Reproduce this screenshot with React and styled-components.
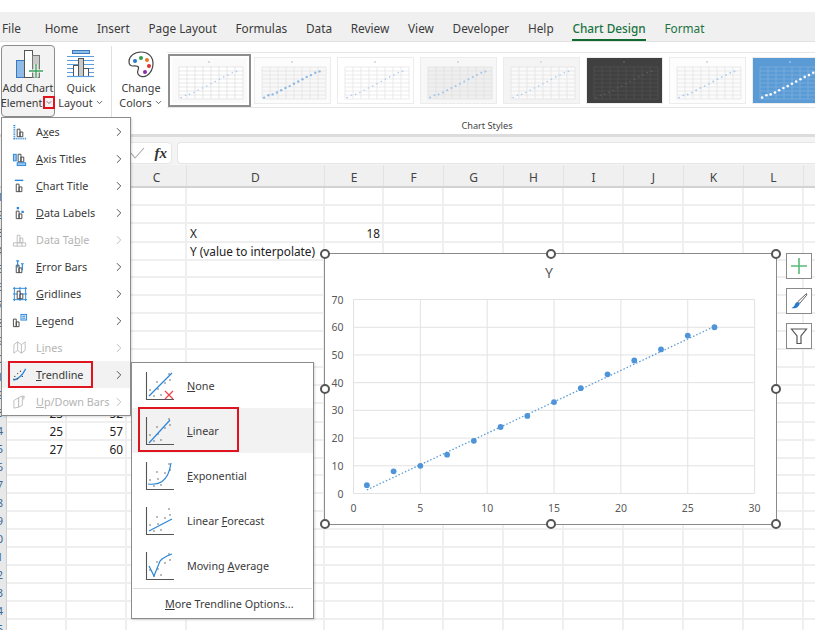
import React from 'react';
import styled, { createGlobalStyle } from 'styled-components';
import { ChevronRight, ChevronDown } from 'lucide-react';

const GlobalStyle = createGlobalStyle`
  html, body {
    margin: 0;
    padding: 0;
    background: #fff;
    overflow: hidden;
  }
  body {
    font-family: "Noto Sans", "Open Sans", sans-serif;
    color: #3b3b3b;
  }
`;

const COLS = '7px 60px 60px 60px 138px 59px repeat(8, 60px)';
const RED = '#e0141f';

const Page = styled.div`
  position: relative;
  width: 815px;
  height: 643px;
  overflow: hidden;
  background: #fff;
  padding-top: 12px;
  box-sizing: border-box;
`;

const TabBar = styled.div`
  display: flex;
  gap: 18.75px;
  height: 29px;
  padding-left: 2px;
  background: #f0f0f0;
  border-bottom: 1px solid #e2e2e2;
  font-size: 11.8px;
`;

const Tab = styled.div`
  height: 29px;
  line-height: 33px;
  box-sizing: border-box;
  white-space: nowrap;
  margin-right: ${p => (p.$first ? '5px' : '0')};
  color: ${p => (p.$green ? '#1a7340' : '#3b3b3b')};
  font-weight: ${p => (p.$active ? 500 : 400)};
  border-bottom: ${p => (p.$active ? '2px solid #0f6b2f' : '0')};
`;

const Ribbon = styled.div`
  display: flex;
  height: 92px;
  background: #fff;
`;

const RibbonButton = styled.div`
  width: ${p => p.$w}px;
  height: 72px;
  margin: 3px 0 0 ${p => p.$ml}px;
  box-sizing: border-box;
  padding-top: ${p => (p.$open ? 4 : 5)}px;
  display: flex;
  flex-direction: column;
  align-items: center;
  font-size: 10.8px;
  line-height: 15px;
  white-space: nowrap;
  color: #3b3b3b;
  background: ${p => (p.$open ? '#f3f3f3' : 'transparent')};
  border: ${p => (p.$open ? '1px solid #8c8c8c' : '0')};
  border-radius: 4px;
`;

const BigIcon = styled.svg`
  height: 30px;
  width: 30px;
  flex: none;
`;

const LabelLine = styled.div`
  display: flex;
  align-items: center;
  height: 15px;
`;

const Caret = styled.span`
  display: inline-flex;
  align-items: center;
  justify-content: center;
  box-sizing: border-box;
  width: ${p => (p.$marked ? '12px' : '9px')};
  height: ${p => (p.$marked ? '13px' : '12px')};
  margin-left: ${p => (p.$marked ? '1px' : '2px')};
  border: ${p => (p.$marked ? `2px solid ${RED}` : '0')};
`;

const Divider = styled.div`
  width: 1px;
  height: 74px;
  margin: 4px 0 0 9px;
  background: #e0e0e0;
`;

const StylesGroup = styled.div`
  flex: 1;
  min-width: 0;
  margin: 10px 0 0 1px;
`;

const Gallery = styled.div`
  display: flex;
  gap: 8px;
  height: 56px;
  box-sizing: border-box;
  padding: 5px 0 4px 5px;
  border-top: 1px solid #e6e6e6;
  border-bottom: 1px solid #e6e6e6;
  overflow: hidden;
`;

const Thumb = styled.svg`
  width: 75px;
  height: 45px;
  flex: none;
  outline: ${p => (p.$selected ? '2px solid #8e8e8e' : '1px solid #ececec')};
  outline-offset: ${p => (p.$selected ? '2px' : '0')};
`;

const GroupLabel = styled.div`
  margin-top: 11px;
  padding-right: 8px;
  font-size: 9.2px;
  line-height: 14px;
  text-align: center;
  color: #444;
`;

const FormulaBar = styled.div`
  display: flex;
  gap: 5px;
  height: 31px;
  box-sizing: border-box;
  padding: 5px 0 1px 100px;
  background: #f4f4f4;
  border-top: 3px solid #dcdcdc;
`;

const FxBox = styled.div`
  width: 72px;
  box-sizing: border-box;
  display: flex;
  align-items: center;
  justify-content: flex-end;
  gap: 9px;
  padding-right: 4px;
  background: #fff;
  border: 1px solid #e6e6e6;
  border-radius: 4px;
`;

const FxLabel = styled.span`
  font-family: "Liberation Serif", serif;
  font-style: italic;
  font-weight: 700;
  font-size: 15px;
  color: #333;
`;

const FormulaInput = styled.div`
  flex: 1;
  background: #fff;
  border: 1px solid #e6e6e6;
  border-right: 0;
  border-radius: 4px 0 0 4px;
`;

const ColumnHeader = styled.div`
  display: grid;
  grid-template-columns: ${COLS};
  height: 23px;
  box-sizing: border-box;
  background: #f0f0f0;
  border-bottom: 2px solid #d2d2d2;
`;

const ColumnLetter = styled.div`
  padding-top: 5px;
  text-align: center;
  font-size: 12px;
  line-height: 16px;
  color: #444;
  border-right: 1px solid #e2e2e2;
`;

const Sheet = styled.div`
  height: 442px;
  overflow: hidden;
`;

const Row = styled.div`
  display: grid;
  grid-template-columns: ${COLS};
  height: 18px;
`;

const RowHead = styled.div`
  display: flex;
  justify-content: flex-end;
  padding-right: 3px;
  overflow: hidden;
  font-size: 11px;
  line-height: 18px;
  color: #3c6a96;
  background: #e8e8e8;
  border-right: 1px solid #cfcfcf;
`;

const Cell = styled.div`
  box-sizing: border-box;
  padding: 1px 2px 0 3px;
  font-size: 11.8px;
  line-height: 16px;
  white-space: nowrap;
  color: #222;
  text-align: ${p => (p.$num ? 'right' : 'left')};
  border-right: 2px solid #efefef;
  border-bottom: 2px solid #efefef;
`;

const Menu = styled.div`
  position: absolute;
  left: ${p => p.$x}px;
  top: ${p => p.$y}px;
  width: ${p => p.$w}px;
  box-sizing: border-box;
  background: #fff;
  border: 1px solid #8c8c8c;
  box-shadow: 1px 1px 2px rgba(0, 0, 0, 0.15);
  font-size: 10.8px;
  z-index: 3;
`;

const MainItem = styled.div`
  position: relative;
  display: flex;
  align-items: center;
  height: 27px;
  padding-left: 10px;
  color: ${p => (p.$off ? '#b4b4b4' : '#3b3b3b')};
  background: ${p => (p.$hot ? '#f2f2f2' : 'transparent')};
`;

const MenuIcon = styled.svg`
  width: 16px;
  height: 16px;
  flex: none;
  margin-right: 8px;
`;

const ItemText = styled.span`
  flex: 1;
  white-space: nowrap;
`;

const Arrow = styled.span`
  display: flex;
  margin-right: 4px;
  color: ${p => (p.$off ? '#b4b4b4' : '#3b3b3b')};
`;

const RedBox = styled.div`
  position: absolute;
  left: ${p => p.$x}px;
  top: ${p => p.$y}px;
  width: ${p => p.$w}px;
  height: ${p => p.$h}px;
  box-sizing: border-box;
  border: 2px solid ${RED};
`;

const TrendItem = styled.div`
  position: relative;
  display: flex;
  align-items: center;
  height: 45px;
  padding-left: 13px;
  background: ${p => (p.$hot ? '#f2f2f2' : 'transparent')};
`;

const TrendIcon = styled.svg`
  width: 30px;
  height: 30px;
  flex: none;
  margin-right: 12px;
`;

const MenuRule = styled.div`
  height: 1px;
  margin: 0 1px;
  background: #dcdcdc;
`;

const MoreItem = styled.div`
  height: 29px;
  line-height: 29px;
  padding-left: 33px;
  white-space: nowrap;
`;

const ChartArea = styled.div`
  position: absolute;
  left: 324px;
  top: 253px;
  display: flex;
  gap: 9px;
  z-index: 2;
`;

const ChartFrame = styled.div`
  position: relative;
  width: 453px;
  height: 272px;
  box-sizing: border-box;
  background: #fff;
  border: 1.5px solid #8a8a8a;
`;

const ChartSvg = styled.svg`
  display: block;
  width: 450px;
  height: 269px;
`;

const Handle = styled.span`
  position: absolute;
  left: ${p => p.$x}%;
  top: ${p => p.$y}%;
  width: 10px;
  height: 10px;
  margin: -5px 0 0 -5px;
  box-sizing: border-box;
  background: #fff;
  border: 2px solid #555;
  border-radius: 50%;
`;

const ChartTools = styled.div`
  display: flex;
  flex-direction: column;
  gap: 9px;
`;

const ToolButton = styled.div`
  display: flex;
  align-items: center;
  justify-content: center;
  width: 26px;
  height: 26px;
  box-sizing: border-box;
  background: #fff;
  border: 1.5px solid #8a8a8a;
`;

const points = [[1, 3], [3, 8], [5, 10], [7, 14], [9, 19], [11, 24], [13, 28], [15, 33], [17, 38], [19, 43], [21, 48], [23, 52], [25, 57], [27, 60]];

const tabs = ['File', 'Home', 'Insert', 'Page Layout', 'Formulas', 'Data', 'Review', 'View', 'Developer', 'Help'];
const letters = ['A', 'B', 'C', 'D', 'E', 'F', 'G', 'H', 'I', 'J', 'K', 'L', 'M'];

// A and B sit under the menu, M starts past the right edge
const headLabel = l => ('ABM'.includes(l) ? '' : l);

const sheetData = {
  3: { D: ['X'], E: ['18', true] },
  4: { D: ['Y (value to interpolate)'] },
  13: { A: ['23', true], B: ['52', true] },
  14: { A: ['25', true], B: ['57', true] },
  15: { A: ['27', true], B: ['60', true] },
};

const thumbs = [
  { bg: '#fafafa', plot: '#fff', grid: '#d9d9d9', dot: '#a9c9ea', r: 0.8, selected: true },
  { bg: '#fcfcfc', plot: '#f8f8f8', grid: '#dedede', dot: '#8fb8e4', r: 1.2 },
  { bg: '#fff', plot: '#fff', grid: '#dddddd', dot: '#a9c9ea', r: 0.8 },
  { bg: '#f7f7f7', plot: '#efefef', grid: '#dcdcdc', dot: '#a2c4e8', r: 1 },
  { bg: '#f4f4f4', plot: '#fafafa', grid: '#dedede', dot: '#a9c9ea', r: 0.8 },
  { bg: '#404040', plot: '#404040', grid: '#555555', dot: '#5f5f5f', r: 0.8 },
  { bg: '#fdfdfd', plot: '#fbfbfb', grid: '#dddddd', dot: '#a9c9ea', r: 0.9 },
  { bg: '#5b9bd5', plot: '#5b9bd5', grid: '#86b6e2', dot: '#ffffff', r: 1.3 },
];

function StyleThumb({ bg, plot, grid, dot, r, selected }) {
  const xs = [7, 15, 23, 31, 39, 47, 55, 63, 71];
  const ys = [9, 13, 17, 21, 25, 29, 33, 37, 41];
  return (
    <Thumb viewBox="0 0 75 45" $selected={selected}>
      <rect width="75" height="45" fill={bg} />
      <rect x="7" y="9" width="64" height="32" fill={plot} />
      {xs.map(x => <line key={x} x1={x} x2={x} y1="9" y2="41" stroke={grid} strokeWidth="0.6" />)}
      {ys.map(y => <line key={y} y1={y} y2={y} x1="7" x2="71" stroke={grid} strokeWidth="0.6" />)}
      <rect x="36" y="3" width="2" height="2" fill={grid} />
      {points.map(([px, py]) => (
        <circle key={px} cx={7 + px * 2.13} cy={41 - py * 0.46} r={r} fill={dot} />
      ))}
    </Thumb>
  );
}

const AddChartIcon = () => (
  <BigIcon viewBox="0 0 30 30">
    <rect x="3.5" y="10.5" width="8" height="17" fill="#8fbce6" stroke="#3a78c0" />
    <rect x="11.5" y="0.5" width="8" height="27" fill="#fff" stroke="#555" />
    <rect x="19.5" y="5.5" width="7" height="22" fill="#c9c9c9" stroke="#777" />
    <path d="M16 21h14M23 14v14" stroke="#fff" strokeWidth="3" />
    <path d="M16 21h14M23 14v14" stroke="#3aa35c" strokeWidth="1.4" />
  </BigIcon>
);

const QuickLayoutIcon = () => (
  <BigIcon viewBox="0 0 30 30">
    <rect x="6.5" y="0.5" width="17" height="3" fill="#8fbce6" stroke="#3a78c0" />
    <path d="M1 6.5h27M1 10.5h27M1 14.5h27M1 18.5h27M1 22.5h27" stroke="#5b9fe0" strokeWidth="1.2" />
    <rect x="7.5" y="15.5" width="5" height="11" fill="#fff" stroke="#555" />
    <rect x="12.5" y="8.5" width="5" height="18" fill="#c9c9c9" stroke="#555" />
    <rect x="17.5" y="18.5" width="5" height="8" fill="#fff" stroke="#555" />
    <path d="M1 26.5h27" stroke="#5b9fe0" strokeWidth="1.2" />
  </BigIcon>
);

const PaletteIcon = () => (
  <BigIcon viewBox="0 0 28 30">
    <path d="M14 2C7 2 2 6.5 2 11.5c0 3 2 4.5 4 4.5 3 0 5-.5 5.5 1.500.5 2-2 3.500-.5 6.500 1.500 3 6 3.500 9 1.500 3.500-2.500 6-7 6-12C26 6.500 21 2 14 2z" fill="#fff" stroke="#444" strokeWidth="1.2" />
    <circle cx="8" cy="11" r="2" fill="#2a78c8" />
    <circle cx="14" cy="8" r="2" fill="#2f9e4f" />
    <circle cx="20" cy="10" r="2" fill="#e87722" />
    <circle cx="22" cy="16" r="2" fill="#e0302f" />
    <circle cx="18" cy="22" r="2" fill="#8a2da8" />
  </BigIcon>
);

const BLUE = '#2a86d8';
const GREY = '#bdbdbd';

const barPair = (c = '#444', dx = 0, dy = 0) => (
  <path d={`M${5.5 + dx} ${5.5 + dy}h3v8h-3zM${8.5 + dx} ${8.5 + dy}h3v5h-3z`} fill="#fff" stroke={c} />
);

const menuGlyphs = {
  axes: (
    <>
      {barPair()}
      <path d="M2.500 1v14.500h13" fill="none" stroke={BLUE} strokeWidth="2" strokeDasharray="1 1" />
    </>
  ),
  axisTitles: (
    <>
      {barPair('#444', 1, -2)}
      <rect x="1.500" y="3.500" width="3" height="7" fill="#9cc8ee" stroke={BLUE} />
      <rect x="5.500" y="12.500" width="9" height="3" fill="#9cc8ee" stroke={BLUE} />
    </>
  ),
  chartTitle: (
    <>
      {barPair('#444', -1, 1)}
      <path d="M3 2.500h9" stroke={BLUE} strokeWidth="1.500" />
    </>
  ),
  dataLabels: (
    <>
      {barPair('#444', -1, 1)}
      <path d="M5 2h2.500v2.500H5zM10 6h2.500v2.500H10z" fill={BLUE} />
    </>
  ),
  dataTable: (
    <>
      {barPair(GREY, 0, -2)}
      <path d="M1.500 11.500h13v3.500h-13zM5.500 11.500v3.500M10.500 11.500v3.500" fill="none" stroke={GREY} />
    </>
  ),
  errorBars: (
    <>
      {barPair('#444', -1, 1)}
      <path d="M6 2v7M4.500 2h3M11 5v7M9.500 5h3" fill="none" stroke={BLUE} strokeWidth="1.200" />
    </>
  ),
  gridlines: (
    <>
      <path d="M1 2.500h15M1 8.500h15M1 14.500h15M2.500 1v15M8.500 1v15M14.500 1v15" stroke={BLUE} fill="none" />
      {barPair()}
    </>
  ),
  legend: (
    <>
      {barPair('#444', -4, 1)}
      <rect x="9.500" y="1.500" width="6" height="6" fill="#d9ebfa" stroke={BLUE} />
      <path d="M11 3.500h3M11 5.500h3" stroke={BLUE} />
    </>
  ),
  lines: (
    <path d="M2 5l4-3 4 3 4-3v9l-4 3-4-3-4 3zM6 2v9M10 5v9" fill="none" stroke={GREY} />
  ),
  trendline: (
    <>
      <path d="M1.500 14C6 13 11 9 14.500 2" fill="none" stroke={BLUE} strokeWidth="1.300" />
      <path d="M3 10h.01M6 12.500h.01M6 7h.01M9 4.500h.01M11 10h.01M2 13h.01" stroke="#444" strokeWidth="1.400" strokeLinecap="round" />
    </>
  ),
  upDown: (
    <path d="M2 7l5-3v10l-5 1zM7 4l4-2v10l-4 2zM12.500 2v4M11.500 3.500l1-1.500 1 1.500" fill="none" stroke={GREY} />
  ),
};

const mainItems = [
  { icon: 'axes', text: ['A', 'x', 'es'] },
  { icon: 'axisTitles', text: ['', 'A', 'xis Titles'] },
  { icon: 'chartTitle', text: ['', 'C', 'hart Title'] },
  { icon: 'dataLabels', text: ['', 'D', 'ata Labels'] },
  { icon: 'dataTable', text: ['Data Ta', 'b', 'le'], off: true },
  { icon: 'errorBars', text: ['', 'E', 'rror Bars'] },
  { icon: 'gridlines', text: ['', 'G', 'ridlines'] },
  { icon: 'legend', text: ['', 'L', 'egend'] },
  { icon: 'lines', text: ['L', 'i', 'nes'], off: true },
  { icon: 'trendline', text: ['', 'T', 'rendline'], hot: true },
  { icon: 'upDown', text: ['', 'U', 'p/Down Bars'], off: true },
];

const dots = 'M5 19h.01M9 25h.01M13 18h.01M16 24h.01M20 12h.01M12 11h.01M24 3h.01M25 9h.01';

const trendItems = [
  {
    text: ['', 'N', 'one'],
    glyph: (
      <>
        <path d="M4 25L27 2" stroke={BLUE} strokeWidth="1.200" fill="none" />
        <path d="M20 20l8 8M28 20l-8 8" stroke="#e8444a" strokeWidth="1.200" />
      </>
    ),
  },
  {
    text: ['', 'L', 'inear'],
    hot: true,
    glyph: <path d="M4 27L25 4" stroke={BLUE} strokeWidth="1.200" fill="none" />,
  },
  {
    text: ['', 'E', 'xponential'],
    glyph: <path d="M3 23c9 1 20 0 23-21" stroke={BLUE} strokeWidth="1.200" fill="none" />,
  },
  {
    text: ['Linear ', 'F', 'orecast'],
    glyph: <path d="M4 25L27 13" stroke={BLUE} strokeWidth="1.200" fill="none" />,
  },
  {
    text: ['Moving ', 'A', 'verage'],
    glyph: <path d="M4 15l5 10 6-15 2-2 5-3 5-2" stroke={BLUE} strokeWidth="1.200" fill="none" />,
  },
];

const AccessText = ({ parts }) => (
  <ItemText>
    {parts[0]}<u>{parts[1]}</u>{parts[2]}
  </ItemText>
);

function ScatterChart() {
  const px = x => 354 + x * 13.37;
  const py = y => 494 - y * 2.771;
  const xTicks = [0, 5, 10, 15, 20, 25, 30];
  const yTicks = [0, 10, 20, 30, 40, 50, 60, 70];
  const label = { fontFamily: '"Noto Sans", sans-serif', fontSize: 10.5, fill: '#595959' };
  return (
    <ChartSvg viewBox="325.500 254.500 450 269">
      <text x="549.500" y="278" textAnchor="middle" style={{ ...label, fontSize: 14 }}>Y</text>
      {xTicks.map(t => (
        <g key={t}>
          <line x1={px(t)} x2={px(t)} y1="300" y2="494" stroke="#e2e2e2" />
          <text x={px(t)} y="512" textAnchor="middle" style={label}>{t}</text>
        </g>
      ))}
      {yTicks.map(t => (
        <g key={t}>
          <line y1={py(t)} y2={py(t)} x1="354" x2="755" stroke="#e2e2e2" />
          <text x="344" y={py(t) + 4} textAnchor="end" style={label}>{t}</text>
        </g>
      ))}
      <line x1={px(1)} y1={py(1.300)} x2={px(27)} y2={py(60.300)} stroke="#5b9bd5" strokeWidth="1.300" strokeDasharray="1.500 2" />
      {points.map(([x, y]) => (
        <circle key={x} cx={px(x)} cy={py(y)} r="2.900" fill="#4f94d8" />
      ))}
    </ChartSvg>
  );
}

export default function App() {
  const rows = Array.from({ length: 25 }, (_, i) => i + 1);
  const handles = [[0, 0], [50, 0], [100, 0], [0, 50], [100, 50], [0, 100], [50, 100], [100, 100]];

  return (
    <>
      <GlobalStyle />
      <Page>
        <TabBar>
          {tabs.map(t => <Tab key={t} $first={t === 'File'}>{t}</Tab>)}
          <Tab $green $active>Chart Design</Tab>
          <Tab $green>Format</Tab>
        </TabBar>

        <Ribbon>
          <RibbonButton $w={54} $ml={1} $open>
            <AddChartIcon />
            <LabelLine>Add Chart</LabelLine>
            <LabelLine>
              Element
              <Caret $marked><ChevronDown size={9} strokeWidth={2} /></Caret>
            </LabelLine>
          </RibbonButton>
          <RibbonButton $w={42} $ml={5}>
            <QuickLayoutIcon />
            <LabelLine>Quick</LabelLine>
            <LabelLine>
              Layout
              <Caret><ChevronDown size={9} strokeWidth={2} /></Caret>
            </LabelLine>
          </RibbonButton>
          <Divider />
          <RibbonButton $w={50} $ml={4}>
            <PaletteIcon />
            <LabelLine>Change</LabelLine>
            <LabelLine>
              Colors
              <Caret><ChevronDown size={9} strokeWidth={2} /></Caret>
            </LabelLine>
          </RibbonButton>
          <StylesGroup>
            <Gallery>
              {thumbs.map((t, i) => <StyleThumb key={i} {...t} />)}
            </Gallery>
            <GroupLabel>Chart Styles</GroupLabel>
          </StylesGroup>
        </Ribbon>

        <FormulaBar>
          <FxBox>
            <svg width="16" height="14" viewBox="0 0 16 14">
              <path d="M1 7l4 5 9-10" fill="none" stroke="#a8a8a8" strokeWidth="1.100" />
            </svg>
            <FxLabel>fx</FxLabel>
          </FxBox>
          <FormulaInput />
        </FormulaBar>

        <ColumnHeader>
          <ColumnLetter />
          {letters.map(l => <ColumnLetter key={l}>{headLabel(l)}</ColumnLetter>)}
        </ColumnHeader>

        <Sheet>
          {rows.map(r => (
            <Row key={r}>
              <RowHead aria-hidden="true">{r}</RowHead>
              {letters.map(l => {
                const c = sheetData[r] && sheetData[r][l];
                return <Cell key={l} $num={c && c[1]}>{c && c[0]}</Cell>;
              })}
            </Row>
          ))}
        </Sheet>

        <ChartArea>
          <ChartFrame>
            <ScatterChart />
            {handles.map(([x, y]) => <Handle key={`${x}-${y}`} $x={x} $y={y} />)}
          </ChartFrame>
          <ChartTools>
            <ToolButton>
              <svg width="18" height="18" viewBox="0 0 18 18">
                <path d="M1 9h16M9 1v16" stroke="#5cb87a" strokeWidth="1.600" />
              </svg>
            </ToolButton>
            <ToolButton>
              <svg width="18" height="18" viewBox="0 0 18 18">
                <path d="M16.500 1.500L8 9.500l1.800 1.800 7-8.300z" fill="#fff" stroke="#666" />
                <path d="M7.500 10c-2 .5-2.500 2-3 3.500-.500 1-2 2-3 2.500 3 .8 7 .2 8.300-4.500z" fill="#2a78c8" />
              </svg>
            </ToolButton>
            <ToolButton>
              <svg width="18" height="18" viewBox="0 0 18 18">
                <path d="M1.500 2h15L11 9v7.500H7V9z" fill="#fff" stroke="#555" strokeWidth="1.200" />
              </svg>
            </ToolButton>
          </ChartTools>
        </ChartArea>

        <Menu $x={1} $y={117} $w={130}>
          {mainItems.map(item => (
            <MainItem key={item.icon} $off={item.off} $hot={item.hot}>
              <MenuIcon viewBox="0 0 17 17">{menuGlyphs[item.icon]}</MenuIcon>
              <AccessText parts={item.text} />
              <Arrow $off={item.off}><ChevronRight size={14} strokeWidth={1.500} /></Arrow>
              {item.hot && <RedBox $x={6} $y={0} $w={85} $h={27} />}
            </MainItem>
          ))}
        </Menu>

        <Menu $x={131} $y={362} $w={183}>
          {trendItems.map(item => (
            <TrendItem key={item.text.join('')} $hot={item.hot}>
              <TrendIcon viewBox="0 0 30 30">
                <path d="M1.500 1v27.500H29" fill="none" stroke="#555" strokeWidth="1.100" />
                <path d={dots} stroke="#555" strokeWidth="1.500" strokeLinecap="round" />
                {item.glyph}
              </TrendIcon>
              <AccessText parts={item.text} />
              {item.hot && <RedBox $x={6} $y={-1} $w={101} $h={45} />}
            </TrendItem>
          ))}
          <MenuRule />
          <MoreItem><u>M</u>ore Trendline Options...</MoreItem>
        </Menu>
      </Page>
    </>
  );
}
